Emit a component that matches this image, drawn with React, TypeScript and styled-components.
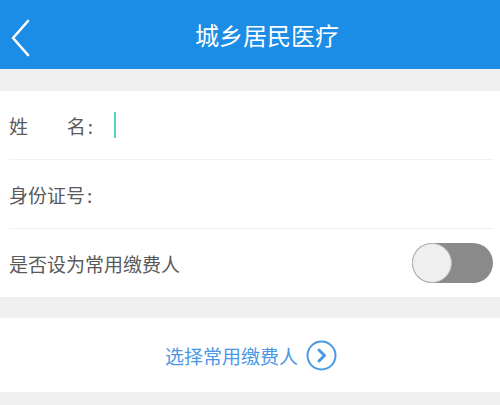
import React, { useState } from 'react'
import styled, { createGlobalStyle } from 'styled-components'

const GlobalStyle = createGlobalStyle`
    html, body {
        margin: 0;
        padding: 0;
        background: #efefef;
        font-family: "Noto Sans CJK SC", "Noto Sans", sans-serif;
    }
`

const Page = styled.div`
    width: 500px;
    min-height: 405px;
    background: #efefef;
`

const Header = styled.header`
    height: 69px;
    background: #1b8de6;
    display: flex;
    align-items: center;
    position: relative;
`

const BackButton = styled.button`
    position: absolute;
    left: 6px;
    top: 18px;
    width: 28px;
    height: 40px;
    padding: 0;
    border: none;
    background: transparent;
    display: flex;
    align-items: center;
    justify-content: center;
`

const Title = styled.h1`
    flex: 1;
    margin: 0;
    padding-left: 34px;
    text-align: center;
    color: #fff;
    font-size: 24px;
    font-weight: 400;
    line-height: 1;
`

const Card = styled.section<{ $top: number }>`
    margin-top: ${p => p.$top}px;
    background: #fff;
`

const Row = styled.div<{ $last?: boolean }>`
    height: 68px;
    margin: 0 7px 0 9px;
    display: flex;
    align-items: center;
    border-bottom: ${p => (p.$last ? 'none' : '1px solid #f0f0f0')};
`

const Label = styled.span`
    font-size: 19px;
    color: #5a5a5a;
    display: flex;
    align-items: center;
`

const SpreadLabel = styled(Label)`
    width: 84px;
    justify-content: space-between;
`

const Colon = styled.span`
    margin-left: 2px;
`

const Cursor = styled.i`
    display: block;
    width: 2px;
    height: 26px;
    margin-left: 21px;
    background: #4fd3c9;
`

const Toggle = styled.button<{ $on: boolean }>`
    margin-left: auto;
    width: 81px;
    height: 40px;
    padding: 0;
    border: none;
    border-radius: 20px;
    background: ${p => (p.$on ? '#1b8de6' : '#8a8a8a')};
    display: flex;
    align-items: center;
    justify-content: ${p => (p.$on ? 'flex-end' : 'flex-start')};
`

const Knob = styled.span`
    width: 40px;
    height: 40px;
    box-sizing: border-box;
    border-radius: 50%;
    background: #efefef;
    border: 1px solid #b5b5b5;
`

const ChooseRow = styled.div`
    height: 74px;
    display: flex;
    align-items: center;
    justify-content: center;
    gap: 8px;
    padding-left: 2px;
`

const ChooseText = styled.span`
    font-size: 19px;
    color: #4a98e4;
`

const ArrowCircle = styled.svg`
    display: block;
`

const App: React.FC = () => {
    const [on, setOn] = useState(false)
    return (
        <Page>
            <GlobalStyle />
            <Header>
                <BackButton aria-label="返回">
                    <svg width="22" height="38" viewBox="0 0 22 38">
                        <path d="M19 2 L4 19 L19 36" fill="none" stroke="#fff" strokeWidth="2.6" strokeLinecap="round" strokeLinejoin="round" />
                    </svg>
                </BackButton>
                <Title>城乡居民医疗</Title>
            </Header>
            <Card $top={22}>
                <Row>
                    <SpreadLabel>
                        <span>姓</span>
                        <span>名<Colon>:</Colon></span>
                    </SpreadLabel>
                    <Cursor />
                </Row>
                <Row>
                    <Label>身份证号<Colon>:</Colon></Label>
                </Row>
                <Row $last>
                    <Label>是否设为常用缴费人</Label>
                    <Toggle $on={on} onClick={() => setOn(!on)}>
                        <Knob />
                    </Toggle>
                </Row>
            </Card>
            <Card $top={21}>
                <ChooseRow>
                    <ChooseText>选择常用缴费人</ChooseText>
                    <ArrowCircle width="31" height="31" viewBox="0 0 31 31">
                        <circle cx="15.5" cy="15.5" r="14" fill="none" stroke="#4a98e4" strokeWidth="2" />
                        <path d="M13 10 L18.5 15.5 L13 21" fill="none" stroke="#4a98e4" strokeWidth="3" strokeLinecap="round" strokeLinejoin="round" />
                    </ArrowCircle>
                </ChooseRow>
            </Card>
        </Page>
    )
}

export default App
